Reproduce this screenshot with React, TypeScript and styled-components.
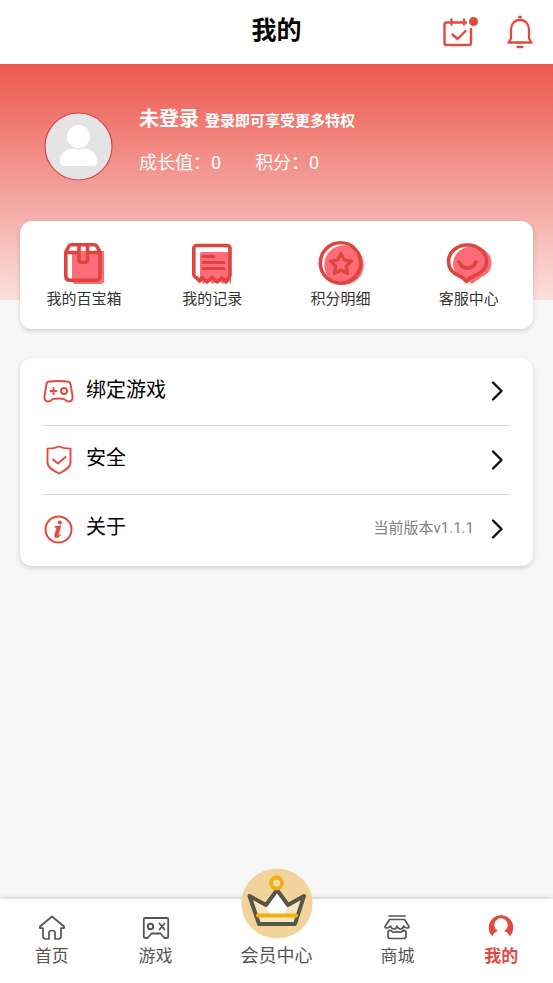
import React from 'react';
import styled, { createGlobalStyle } from 'styled-components';

const RED = '#e04a41';
const PINK = '#ff6b76';
const DEEP = '#dd453e';
const GREY = '#555';

const GlobalStyle = createGlobalStyle`
  * { box-sizing: border-box; }
  body {
    margin: 0;
    background: #f7f7f7;
    font-family: Roboto, "Noto Sans CJK SC", sans-serif;
    color: #000;
  }
  button, a { font: inherit; color: inherit; }
`;

const Page = styled.div`
  display: flex;
  flex-direction: column;
  min-height: 100vh;
`;

const Header = styled.header`
  display: grid;
  grid-template-columns: 1fr auto 1fr;
  align-items: center;
  height: 64px;
  padding: 0 20px;
  background: #fff;
`;

const Title = styled.h1`
  grid-column: 2;
  margin: 0;
  padding-bottom: 2px;
  font-size: 25px;
  line-height: 36px;
  font-weight: 700;
`;

const HeaderActions = styled.div`
  display: flex;
  justify-content: flex-end;
  align-items: center;
  gap: 28px;
`;

const IconButton = styled.button`
  display: flex;
  padding: 0;
  border: 0;
  background: none;
  cursor: pointer;
`;

const Main = styled.main`
  flex: 1;
  display: flex;
  flex-direction: column;
  padding: 0 20px 28px;
  background: linear-gradient(#ec584e, #fce0de) no-repeat 0 0 / 100% 236px;
`;

const Profile = styled.section`
  display: flex;
  align-items: center;
  gap: 26px;
  height: 157px;
  padding: 8px 24px 0;
  color: #fff;
`;

const ProfileText = styled.div`
  display: flex;
  flex-direction: column;
  gap: 14px;
  padding-bottom: 14px;
`;

const NameLine = styled.div`
  display: flex;
  align-items: baseline;
  gap: 6px;
  font-weight: 700;
  line-height: 30px;
`;

const Name = styled.span`
  font-size: 20px;
`;

const Tagline = styled.span`
  font-size: 15px;
`;

const Stats = styled.div`
  display: flex;
  gap: 34px;
  font-size: 18px;
  line-height: 26px;
`;

const Card = styled.section`
  background: #fff;
  border-radius: 12px;
  box-shadow: 0 2px 5px rgba(0, 0, 0, 0.16);
`;

const Shortcuts = styled(Card)`
  display: grid;
  grid-template-columns: repeat(4, 1fr);
  padding: 17px 0 19px;
`;

const Shortcut = styled.button`
  display: flex;
  flex-direction: column;
  align-items: center;
  gap: 2px;
  padding: 0;
  border: 0;
  background: none;
  color: #333;
  font-size: 15px;
  line-height: 22px;
  cursor: pointer;
`;

const Menu = styled(Card)`
  margin-top: 29px;
  padding: 0 23px 1px;
`;

const MenuRow = styled.button`
  display: flex;
  align-items: center;
  width: 100%;
  height: 69px;
  padding: 0 6px 1px 0;
  border: 0;
  border-bottom: 1px solid #d8d8d8;
  background: none;
  text-align: left;
  cursor: pointer;

  &:first-child {
    height: 68px;
  }

  &:last-child {
    height: 70px;
    padding-bottom: 3px;
    border-bottom: 0;
  }
`;

const MenuLabel = styled.span`
  flex: 1;
  padding: 0 0 3px 12px;
  font-size: 20px;
  line-height: 30px;
`;

const MenuNote = styled.span`
  padding: 0 16px 2px 0;
  color: #808080;
  font-size: 15px;
  line-height: 22px;
`;

const TabBar = styled.nav`
  display: flex;
  align-items: flex-end;
  height: 84px;
  padding-bottom: 14px;
  background: #fff;
  box-shadow: 0 -1px 6px rgba(0, 0, 0, 0.18);
`;

const Tab = styled.a<{ $wide?: boolean; $active?: boolean }>`
  flex: ${(p) => (p.$wide ? 4 : 3)} 1 0;
  display: flex;
  flex-direction: column;
  align-items: center;
  color: ${(p) => (p.$active ? RED : GREY)};
  font-size: ${(p) => (p.$wide ? 18 : 17)}px;
  font-weight: ${(p) => (p.$active ? 700 : 400)};
  line-height: 26px;
  text-decoration: none;

  svg {
    margin-bottom: ${(p) => (p.$wide ? 4 : 1)}px;
  }
`;

const CalendarIcon = () => (
  <svg width="37" height="32" viewBox="0 0 37 32" fill="none" stroke={RED} strokeWidth="2.4" strokeLinecap="round" strokeLinejoin="round">
    <path d="M24 6.500H4.200Q2.500 6.500 2.500 8.200V27Q2.500 29 4.500 29H27Q29 29 29 27V13M9.500 3.500v5M22 3.500v5M10.500 18.500l5 4.500 8-8" />
    <circle cx="31.500" cy="5.500" r="4.500" fill={RED} stroke="none" />
  </svg>
);

const BellIcon = () => (
  <svg width="26" height="34" viewBox="0 0 26 34" fill="none" stroke={RED} strokeWidth="2.3" strokeLinecap="round" strokeLinejoin="round">
    <path d="M1.500 27.500H24.500L22 23.500V14.500C22 9 18.500 5 13 5S4 9 4 14.500V23.500ZM12.200 2h1.600M10.500 32h5" />
  </svg>
);

const Avatar = () => (
  <svg width="69" height="69" viewBox="0 0 69 69" aria-label="头像">
    <circle cx="34.500" cy="34.500" r="33.500" fill="#e4e4e4" stroke="#d9474c" strokeWidth="1.200" />
    <circle cx="34.500" cy="24.500" r="11.500" fill="#fff" />
    <path d="M16 50c0-8 5-13.500 13-13.500q5.500 2 11 0C48 36.500 53 42 53 50q0 4-4 4H20q-4 0-4-4Z" fill="#fff" />
  </svg>
);

const BoxIcon = () => (
  <svg width="48" height="48" viewBox="0 0 48 48" fill="none" stroke={DEEP} strokeWidth="3.600" strokeLinejoin="round">
    <path d="M12 13h32v30q0 3-3 3H16q-4 0-4-4Z" fill={PINK} stroke="none" />
    <path d="M5.800 15h4.500v26H8q-2.200 0-2.200-2Z" fill="#fff" stroke="none" />
    <path d="M11 6.800H34Q36 6.800 37 8.500L40 14V38Q40 42.200 36 42.200H10Q5.800 42.200 5.800 38V14L8.700 8.500Q9.500 6.800 11 6.800ZM6 14.500H19M27 14.500H40" />
    <path d="M19 7V21.500Q19 24.200 21.500 24.200H25Q27.500 24.200 27.500 21.500V7" />
  </svg>
);

const ReceiptIcon = () => (
  <svg width="48" height="48" viewBox="0 0 48 48" fill="none" stroke={DEEP} strokeWidth="3.600" strokeLinecap="round" strokeLinejoin="round">
    <path d="M13 14h30v32l-4-4-4 4-5-4-5 4-5-4-5 4-3-4V17q0-3 1-3Z" fill={PINK} stroke="none" />
    <path d="M9 40Q5.800 39 5.800 36V10.500Q5.800 7.500 9 7.500H38.500Q42 7.500 42 10.500V37Q42 39 40 41L38 44l-4-4-5 4-5-4.500-5 4.500-5-4.500-2.500 3.500Z" />
    <path d="M15 18.500H26M15 24.500H36M15 30.500H36" strokeWidth="3" />
  </svg>
);

const StarIcon = () => (
  <svg width="48" height="48" viewBox="0 0 48 48" fill="none" stroke={DEEP} strokeWidth="3.600" strokeLinejoin="round">
    <circle cx="27" cy="27" r="19.800" fill={PINK} stroke="none" />
    <circle cx="23.500" cy="25" r="20.200" />
    <path d="M24 15.500l3.300 6.500 7.200 1-5.200 5.200 1.200 7.300-6.500-3.500-6.500 3.500 1.200-7.300-5.200-5.200 7.200-1Z" strokeWidth="3.200" />
  </svg>
);

const ServiceIcon = () => (
  <svg width="48" height="48" viewBox="0 0 48 48" fill="none" stroke={DEEP} strokeWidth="3.600" strokeLinecap="round" strokeLinejoin="round">
    <path d="M27 8.500c11 0 19.500 6.500 19.500 16.500 0 7-4 11.500-10 14L27 46l-6-5c-7-2-13-7-13-15 0-10 9-17.500 19-17.500Z" fill={PINK} stroke="none" />
    <path d="M22.500 7C12 7 3.500 14 3.500 23.500 3.500 31 8 35.500 14.500 38c3 1 4.500 2.500 7 5.500 2.500-3.500 4.500-4.500 8-6 7-2.500 12-7.500 12-14C41.500 14 33 7 22.500 7Z" />
    <path d="M14 24q2.500 6 8.500 6T31 24" />
  </svg>
);

const PadIcon = () => (
  <svg width="31" height="30" viewBox="0 0 31 30" fill="none" stroke={RED} strokeWidth="1.900" strokeLinecap="round" strokeLinejoin="round">
    <path d="M6.500 5.500Q15.500 4.500 24.500 5.500Q27 5.700 27.500 8L29.500 20Q30 25.500 26 25.500Q23.500 25.500 22.500 24Q21 22.500 15.500 22.500T8.500 24Q7.500 25.500 5 25.500Q1 25.500 1.500 20L3.500 8Q4 5.700 6.500 5.500ZM7.500 15h6M10.500 12v6" />
    <circle cx="21" cy="15" r="3" />
  </svg>
);

const ShieldIcon = () => (
  <svg width="31" height="30" viewBox="0 0 31 30" fill="none" stroke={RED} strokeWidth="1.900" strokeLinecap="round" strokeLinejoin="round">
    <path d="M16 1.500C12 3.300 9 3.600 4.500 3.600V17.500C4.500 22.500 10 25.500 16 28.500C22 25.500 27.500 22.500 27.500 17.500V3.600C23 3.600 20 3.300 16 1.500ZM10 14.500l5 4 7.500-6.500" />
  </svg>
);

const InfoIcon = () => (
  <svg width="31" height="30" viewBox="0 0 31 30" fill="none" stroke={RED} strokeWidth="2">
    <circle cx="15.500" cy="15.500" r="13" />
    <circle cx="16.800" cy="8.500" r="2" fill={RED} stroke="none" />
    <path d="M12 12.300l6-.5-2.700 9c-.2 1.200.5 1 2-.8l.6.500c-1.500 2.500-3 3.200-4.500 3.200-1.800 0-2.200-1.200-1.700-2.900l2-6.800-2-.7Z" fill={RED} stroke={RED} strokeWidth=".5" />
  </svg>
);

const Chevron = () => (
  <svg width="14" height="22" viewBox="0 0 14 22" fill="none" stroke="#111" strokeWidth="2.400" strokeLinecap="round" strokeLinejoin="round">
    <path d="M3 2.500L11.500 11L3 19.500" />
  </svg>
);

const HomeIcon = () => (
  <svg width="28" height="28" viewBox="0 0 28 28" fill="none" stroke={GREY} strokeWidth="1.700" strokeLinecap="round" strokeLinejoin="round">
    <path d="M14 2.500L26 12.500Q27 14.200 25 14.200H23V22Q23 25 20.500 25H17V18.500Q17 16.500 14 16.500T11 18.500V25H7.500Q5 25 5 22V14.200H3Q1 14.200 2 12.500Z" />
  </svg>
);

const GameIcon = () => (
  <svg width="28" height="28" viewBox="0 0 28 28" fill="none" stroke={GREY} strokeWidth="1.800" strokeLinecap="round" strokeLinejoin="round">
    <path d="M3 4H25Q26.200 4 26.200 5.500V22.500Q26.200 24 24.500 24H22.500L18.500 19.500H9.500L5.500 24H3.500Q1.800 24 1.800 22.500V5.500Q1.800 4 3 4ZM17.500 9.500l5 6M22.500 9.500l-5 6" />
    <circle cx="8.500" cy="12.500" r="2.700" strokeWidth="2" />
  </svg>
);

const ShopIcon = () => (
  <svg width="28" height="28" viewBox="0 0 28 28" fill="none" stroke={GREY} strokeWidth="1.700" strokeLinecap="round" strokeLinejoin="round">
    <path d="M6 2H22M6.500 5.500H21.500L26 12.500Q26 14 24 14T20.500 12Q20 15 17.500 15T14 12Q13.500 15 11 15T7.500 12Q6 14 4 14T2 12.500ZM5 17.500V22Q5 24.500 7.500 24.500H20.500Q23 24.500 23 22V17.500Q21 15.500 19 17.500Q16.500 19 14 17.500Q11.500 19 9 17.500Q7 15.500 5 17.500Z" />
  </svg>
);

const MeIcon = () => (
  <svg width="28" height="28" viewBox="0 0 28 28">
    <path d="M5.500 22.500A12.300 12.300 0 1 1 22.500 22.500Q22 18.500 17 17A6.700 6.700 0 1 0 11 17Q6 18.500 5.500 22.500Z" fill={RED} />
  </svg>
);

const CrownIcon = () => (
  <svg width="72" height="71" viewBox="0 0 72 71" fill="none">
    <ellipse cx="36" cy="35.500" rx="35.700" ry="35" fill="#f1d49b" />
    <path d="M8.500 28L25 37L36 22L47 37L63 28L54 56H18Z" fill="#f7e6c4" />
    <path d="M25 38L36 22L47 38L43 47H29Z" fill="#fff" />
    <path d="M8.500 28L25 37L36 22L47 37L63 28L54 56H18Z" stroke="#575647" strokeWidth="4" strokeLinejoin="round" />
    <path d="M17 47.500H55" stroke="#f2b20e" strokeWidth="4.200" strokeLinecap="round" />
    <circle cx="35.500" cy="15" r="5.500" fill="#f7dda3" stroke="#f2ae12" strokeWidth="3.800" />
  </svg>
);

const shortcuts = [
  { label: '我的百宝箱', Icon: BoxIcon },
  { label: '我的记录', Icon: ReceiptIcon },
  { label: '积分明细', Icon: StarIcon },
  { label: '客服中心', Icon: ServiceIcon },
];

const menu = [
  { label: '绑定游戏', Icon: PadIcon },
  { label: '安全', Icon: ShieldIcon },
  { label: '关于', Icon: InfoIcon, note: '当前版本v1.1.1' },
];

const tabs = [
  { label: '首页', Icon: HomeIcon },
  { label: '游戏', Icon: GameIcon },
  { label: '会员中心', Icon: CrownIcon, wide: true },
  { label: '商城', Icon: ShopIcon },
  { label: '我的', Icon: MeIcon, active: true },
];

export default function App() {
  return (
    <Page>
      <GlobalStyle />
      <Header>
        <Title>我的</Title>
        <HeaderActions>
          <IconButton aria-label="签到"><CalendarIcon /></IconButton>
          <IconButton aria-label="通知"><BellIcon /></IconButton>
        </HeaderActions>
      </Header>
      <Main>
        <Profile>
          <Avatar />
          <ProfileText>
            <NameLine>
              <Name>未登录</Name>
              <Tagline>登录即可享受更多特权</Tagline>
            </NameLine>
            <Stats>
              <span>成长值：0</span>
              <span>积分：0</span>
            </Stats>
          </ProfileText>
        </Profile>
        <Shortcuts>
          {shortcuts.map(({ label, Icon }) => (
            <Shortcut key={label}>
              <Icon />
              {label}
            </Shortcut>
          ))}
        </Shortcuts>
        <Menu>
          {menu.map(({ label, Icon, note }) => (
            <MenuRow key={label}>
              <Icon />
              <MenuLabel>{label}</MenuLabel>
              {note && <MenuNote>{note}</MenuNote>}
              <Chevron />
            </MenuRow>
          ))}
        </Menu>
      </Main>
      <TabBar>
        {tabs.map(({ label, Icon, wide, active }) => (
          <Tab key={label} href="#" $wide={wide} $active={active} aria-current={active ? 'page' : undefined}>
            <Icon />
            {label}
          </Tab>
        ))}
      </TabBar>
    </Page>
  );
}
